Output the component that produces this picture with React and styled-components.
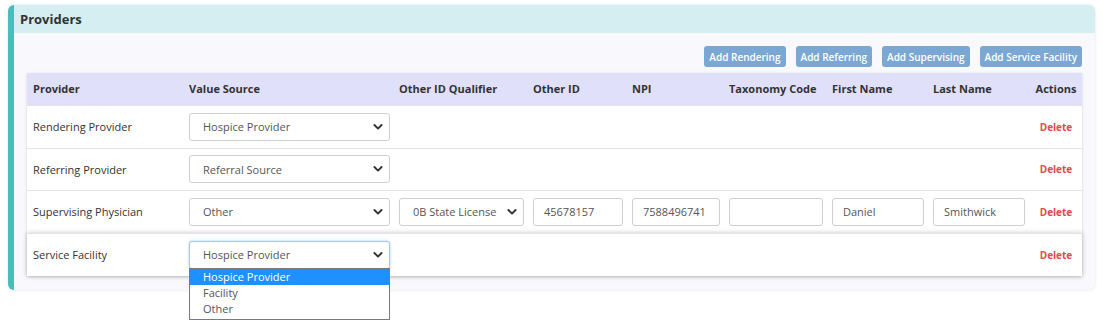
import React from "react";
import styled, { createGlobalStyle } from "styled-components";

const Global = createGlobalStyle`
  html, body { margin: 0; padding: 0; background: #ffffff; }
  body { font-family: "Open Sans", "Noto Sans", sans-serif; color: #333; }
  * { box-sizing: border-box; }
`;

const Page = styled.div`
  padding: 5px 8px 0 8px;
  width: 1103px;
  height: 326px;
`;

const Card = styled.section`
  width: 1087px;
  background: #f8f8fd;
  border-left: 6px solid #45bfb9;
  border-radius: 6px;
  box-shadow: 0 0 3px rgba(0, 0, 0, 0.12);
`;

const CardHeader = styled.div`
  height: 28px;
  display: flex;
  align-items: center;
  padding: 0 6px;
  background: #d5eef2;
  border-top-right-radius: 6px;
  font-size: 13px;
  font-weight: 700;
  color: #333;
`;

const CardBody = styled.div`
  padding: 13px 13px 14px 13px;
`;

const Toolbar = styled.div`
  display: flex;
  justify-content: flex-end;
  gap: 10px;
  margin-bottom: 6px;
`;

const ActionButton = styled.button`
  height: 21px;
  padding: 0 5px;
  border: none;
  border-radius: 3px;
  background: #7aa7d3;
  color: #fff;
  font-family: inherit;
  font-size: 10px;
  font-weight: 600;
  cursor: pointer;
`;

const Table = styled.div`
  width: 1055px;
  background: #fff;
  box-shadow: 0 1px 3px rgba(0, 0, 0, 0.15);
`;

const cols = "156px 210px 134px 99px 97px 103px 101px 103px 52px";

const HeadRow = styled.div`
  display: grid;
  grid-template-columns: ${cols};
  height: 32px;
  padding-bottom: 1px;
  align-items: center;
  background: #e0e0fb;
`;

const HeadCell = styled.div`
  padding-left: ${(p) => (p.$center ? "0" : "6px")};
  font-size: 11px;
  font-weight: 700;
  color: #333;
  white-space: nowrap;
  text-align: ${(p) => (p.$center ? "center" : "left")};
  padding-right: ${(p) => (p.$center ? "0" : "3px")};
`;

const Row = styled.div`
  display: grid;
  grid-template-columns: ${cols};
  height: ${(p) => (p.$h ? p.$h : 43)}px;
  padding-bottom: 1px;
  align-items: center;
  background: #fff;
  border-top: 1px solid #e4e4e4;
  position: relative;
  z-index: ${(p) => (p.$raised ? 2 : 1)};
  box-shadow: ${(p) => (p.$raised ? "0 0 5px rgba(0,0,0,0.22)" : "none")};
`;

const Cell = styled.div`
  font-size: 11px;
  color: #333;
  display: flex;
  align-items: center;
  justify-content: ${(p) => (p.$center ? "center" : "flex-start")};
  padding-left: ${(p) => (p.$center ? "0" : "6px")};
  padding-right: ${(p) => (p.$center ? "0" : "3px")};
`;

const SelectBox = styled.div`
  position: relative;
  width: ${(p) => p.$w}px;
  height: 28px;
  border: 1px solid ${(p) => (p.$focus ? "#a9c8e6" : "#cfcfcf")};
  box-shadow: ${(p) => (p.$focus ? "0 0 3px rgba(102,160,220,0.55)" : "none")};
  border-radius: 3px;
  background: #fff;
  display: flex;
  align-items: center;
  padding-left: 13px;
  font-size: 11px;
  color: #555;
`;

const Chevron = styled.svg`
  position: absolute;
  right: 6px;
  top: 50%;
  margin-top: -4px;
  width: 10px;
  height: 8px;
`;

const Input = styled.div`
  width: ${(p) => p.$w}px;
  height: 28px;
  border: 1px solid #cfcfcf;
  border-radius: 3px;
  background: #fff;
  display: flex;
  align-items: center;
  padding-left: 10px;
  font-size: 11px;
  color: #555;
`;

const DeleteLink = styled.span`
  color: #dc4d4d;
  font-size: 10px;
  font-weight: 700;
  cursor: pointer;
`;

const Menu = styled.ul`
  position: absolute;
  left: -1px;
  top: 100%;
  width: 201px;
  margin: 0;
  padding: 0 0 2px 0;
  list-style: none;
  background: #fff;
  border: 1px solid #7a7a7a;
  z-index: 10;
`;

const MenuItem = styled.li`
  height: 16px;
  line-height: 16px;
  padding-left: 13px;
  font-size: 11px;
  color: ${(p) => (p.$active ? "#fff" : "#555")};
  background: ${(p) => (p.$active ? "#1e90ff" : "transparent")};
`;

function Select({ w, value, focus, children }) {
  return (
    <SelectBox $w={w} $focus={focus}>
      {value}
      <Chevron viewBox="0 0 10 8">
        <path d="M1.4 2 L5 5.6 L8.6 2" fill="none" stroke="#333" strokeWidth="1.9" strokeLinecap="round" strokeLinejoin="round" />
      </Chevron>
      {children}
    </SelectBox>
  );
}

const headers = [
  "Provider",
  "Value Source",
  "Other ID Qualifier",
  "Other ID",
  "NPI",
  "Taxonomy Code",
  "First Name",
  "Last Name",
];

function EmptyCells({ n }) {
  return Array.from({ length: n }, (_, i) => <Cell key={i} />);
}

export default function App() {
  return (
    <>
      <Global />
      <Page>
        <Card>
          <CardHeader>Providers</CardHeader>
          <CardBody>
            <Toolbar>
              <ActionButton>Add Rendering</ActionButton>
              <ActionButton>Add Referring</ActionButton>
              <ActionButton>Add Supervising</ActionButton>
              <ActionButton>Add Service Facility</ActionButton>
            </Toolbar>
            <Table>
              <HeadRow>
                {headers.map((h) => (
                  <HeadCell key={h}>{h}</HeadCell>
                ))}
                <HeadCell $center>Actions</HeadCell>
              </HeadRow>

              <Row>
                <Cell>Rendering Provider</Cell>
                <Cell>
                  <Select w={201} value="Hospice Provider" />
                </Cell>
                <EmptyCells n={6} />
                <Cell $center>
                  <DeleteLink>Delete</DeleteLink>
                </Cell>
              </Row>

              <Row $h={42}>
                <Cell>Referring Provider</Cell>
                <Cell>
                  <Select w={201} value="Referral Source" />
                </Cell>
                <EmptyCells n={6} />
                <Cell $center>
                  <DeleteLink>Delete</DeleteLink>
                </Cell>
              </Row>

              <Row>
                <Cell>Supervising Physician</Cell>
                <Cell>
                  <Select w={201} value="Other" />
                </Cell>
                <Cell>
                  <Select w={125} value="0B State License" />
                </Cell>
                <Cell>
                  <Input $w={90}>45678157</Input>
                </Cell>
                <Cell>
                  <Input $w={88}>7588496741</Input>
                </Cell>
                <Cell>
                  <Input $w={94} />
                </Cell>
                <Cell>
                  <Input $w={92}>Daniel</Input>
                </Cell>
                <Cell>
                  <Input $w={92}>Smithwick</Input>
                </Cell>
                <Cell $center>
                  <DeleteLink>Delete</DeleteLink>
                </Cell>
              </Row>

              <Row $raised>
                <Cell>Service Facility</Cell>
                <Cell>
                  <Select w={201} value="Hospice Provider" focus>
                    <Menu>
                      <MenuItem $active>Hospice Provider</MenuItem>
                      <MenuItem>Facility</MenuItem>
                      <MenuItem>Other</MenuItem>
                    </Menu>
                  </Select>
                </Cell>
                <EmptyCells n={6} />
                <Cell $center>
                  <DeleteLink>Delete</DeleteLink>
                </Cell>
              </Row>
            </Table>
          </CardBody>
        </Card>
      </Page>
    </>
  );
}
